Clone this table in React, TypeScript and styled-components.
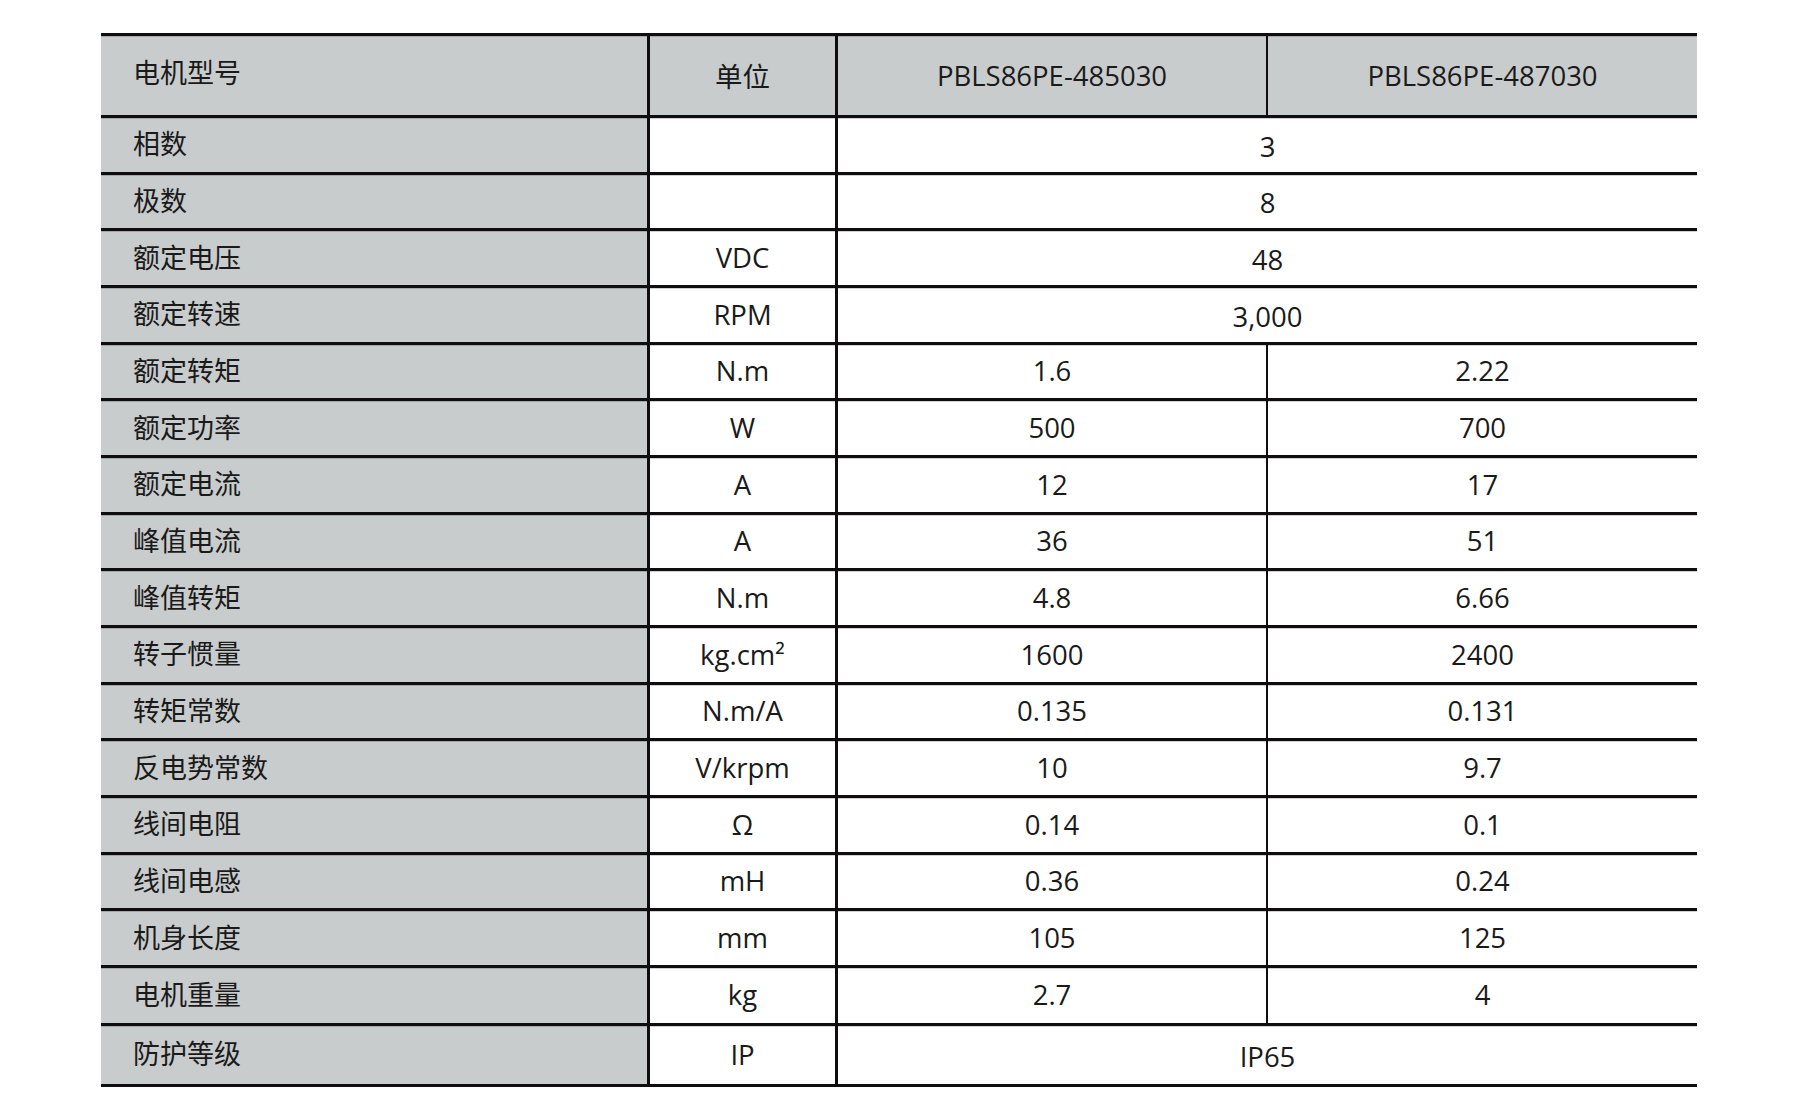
import React from 'react';
import styled, { createGlobalStyle } from 'styled-components';

const GlobalStyle = createGlobalStyle`
  html, body {
    margin: 0;
    padding: 0;
    background: #ffffff;
  }
  body {
    font-family: "Open Sans", "Noto Sans CJK SC", sans-serif;
    color: #1a1a1a;
  }
`;

const Page = styled.div`
  padding: 33px 0 0 101px;
`;

const SpecTable = styled.table`
  width: 1596px;
  table-layout: fixed;
  border-collapse: separate;
  border-spacing: 0;
  border-top: 3px solid #0f0d0e;
  font-size: 27.5px;
`;

const Row = styled.tr<{ $h: number }>`
  height: ${(p) => p.$h}px;
`;

const Cell = styled.td<{
  $gray?: boolean;
  $last?: boolean;
  $thin?: boolean;
  $span?: boolean;
}>`
  box-sizing: border-box;
  padding: ${(p) => (p.$span ? '3px 0 0' : '0 0 1px')};
  text-align: center;
  vertical-align: middle;
  font-weight: 400;
  background: ${(p) => (p.$gray ? '#c9cccd' : '#ffffff')};
  border-bottom: 3px solid #0f0d0e;
  border-right: ${(p) =>
    p.$last ? 'none' : p.$thin ? '2px solid #0f0d0e' : '3px solid #0f0d0e'};
  box-shadow: inset 0 1px 0 rgba(0, 0, 0, 0.18);
  white-space: nowrap;
`;

const LabelCell = styled(Cell)`
  text-align: left;
  padding: 0 0 4px 32px;
  font-family: "Noto Sans CJK SC", sans-serif;
  font-size: 27px;
`;

const HeadLabel = styled.span`
  position: relative;
  top: -2px;
`;

type Spec = {
  label: string;
  unit: string;
  a: string;
  b?: string;
};

const specs: Spec[] = [
  { label: '相数', unit: '', a: '3' },
  { label: '极数', unit: '', a: '8' },
  { label: '额定电压', unit: 'VDC', a: '48' },
  { label: '额定转速', unit: 'RPM', a: '3,000' },
  { label: '额定转矩', unit: 'N.m', a: '1.6', b: '2.22' },
  { label: '额定功率', unit: 'W', a: '500', b: '700' },
  { label: '额定电流', unit: 'A', a: '12', b: '17' },
  { label: '峰值电流', unit: 'A', a: '36', b: '51' },
  { label: '峰值转矩', unit: 'N.m', a: '4.8', b: '6.66' },
  { label: '转子惯量', unit: 'kg.cm²', a: '1600', b: '2400' },
  { label: '转矩常数', unit: 'N.m/A', a: '0.135', b: '0.131' },
  { label: '反电势常数', unit: 'V/krpm', a: '10', b: '9.7' },
  { label: '线间电阻', unit: 'Ω', a: '0.14', b: '0.1' },
  { label: '线间电感', unit: 'mH', a: '0.36', b: '0.24' },
  { label: '机身长度', unit: 'mm', a: '105', b: '125' },
  { label: '电机重量', unit: 'kg', a: '2.7', b: '4' },
  { label: '防护等级', unit: 'IP', a: 'IP65' },
];

// the source sheet's rows are not quite even: the last two run taller
const rowHeight = (i: number) => (i === 16 ? 61 : i === 15 ? 58 : 56.67);

export default function App() {
  return (
    <Page>
      <GlobalStyle />
      <SpecTable>
        <colgroup>
          <col style={{ width: 549 }} />
          <col style={{ width: 188 }} />
          <col style={{ width: 430 }} />
          <col style={{ width: 429 }} />
        </colgroup>
        <thead>
          <Row $h={82}>
            <LabelCell as="th" $gray>
              <HeadLabel>电机型号</HeadLabel>
            </LabelCell>
            <Cell as="th" $gray>
              单位
            </Cell>
            <Cell as="th" $gray $thin>
              PBLS86PE-485030
            </Cell>
            <Cell as="th" $gray $last>
              PBLS86PE-487030
            </Cell>
          </Row>
        </thead>
        <tbody>
          {specs.map((s, i) => (
            <Row key={s.label} $h={rowHeight(i)}>
              <LabelCell $gray>{s.label}</LabelCell>
              <Cell>{s.unit}</Cell>
              {s.b === undefined ? (
                <Cell colSpan={2} $last $span>
                  {s.a}
                </Cell>
              ) : (
                <>
                  <Cell $thin>{s.a}</Cell>
                  <Cell $last>{s.b}</Cell>
                </>
              )}
            </Row>
          ))}
        </tbody>
      </SpecTable>
    </Page>
  );
}
